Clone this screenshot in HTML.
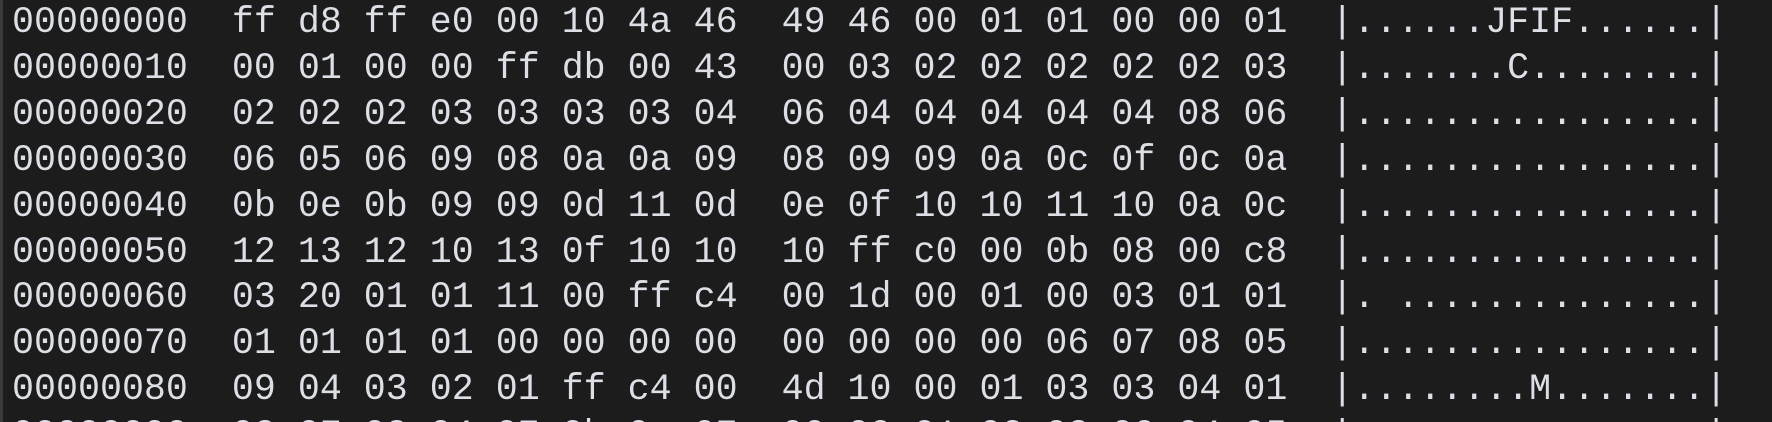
<!DOCTYPE html>
<html><head><meta charset="utf-8"><style>
html,body{margin:0;padding:0;background:#1c1c1c;width:1772px;height:422px;overflow:hidden}
body{border-left:3px solid #3a3a3a;box-sizing:border-box}
pre{margin:0;padding:1px 0 0 9px;height:421px;overflow:hidden;font-family:"Liberation Mono",monospace;font-size:36.65px;line-height:45.9px;color:#dcdfe6;white-space:pre}
</style></head><body><pre>00000000  ff d8 ff e0 00 10 4a 46  49 46 00 01 01 00 00 01  |......JFIF......|
00000010  00 01 00 00 ff db 00 43  00 03 02 02 02 02 02 03  |.......C........|
00000020  02 02 02 03 03 03 03 04  06 04 04 04 04 04 08 06  |................|
00000030  06 05 06 09 08 0a 0a 09  08 09 09 0a 0c 0f 0c 0a  |................|
00000040  0b 0e 0b 09 09 0d 11 0d  0e 0f 10 10 11 10 0a 0c  |................|
00000050  12 13 12 10 13 0f 10 10  10 ff c0 00 0b 08 00 c8  |................|
00000060  03 20 01 01 11 00 ff c4  00 1d 00 01 00 03 01 01  |. ..............|
00000070  01 01 01 01 00 00 00 00  00 00 00 00 06 07 08 05  |................|
00000080  09 04 03 02 01 ff c4 00  4d 10 00 01 03 03 04 01  |........M.......|
00000090  03 07 08 04 07 0b 0c 07  00 00 01 02 03 00 04 05  |................|
</pre></body></html>
